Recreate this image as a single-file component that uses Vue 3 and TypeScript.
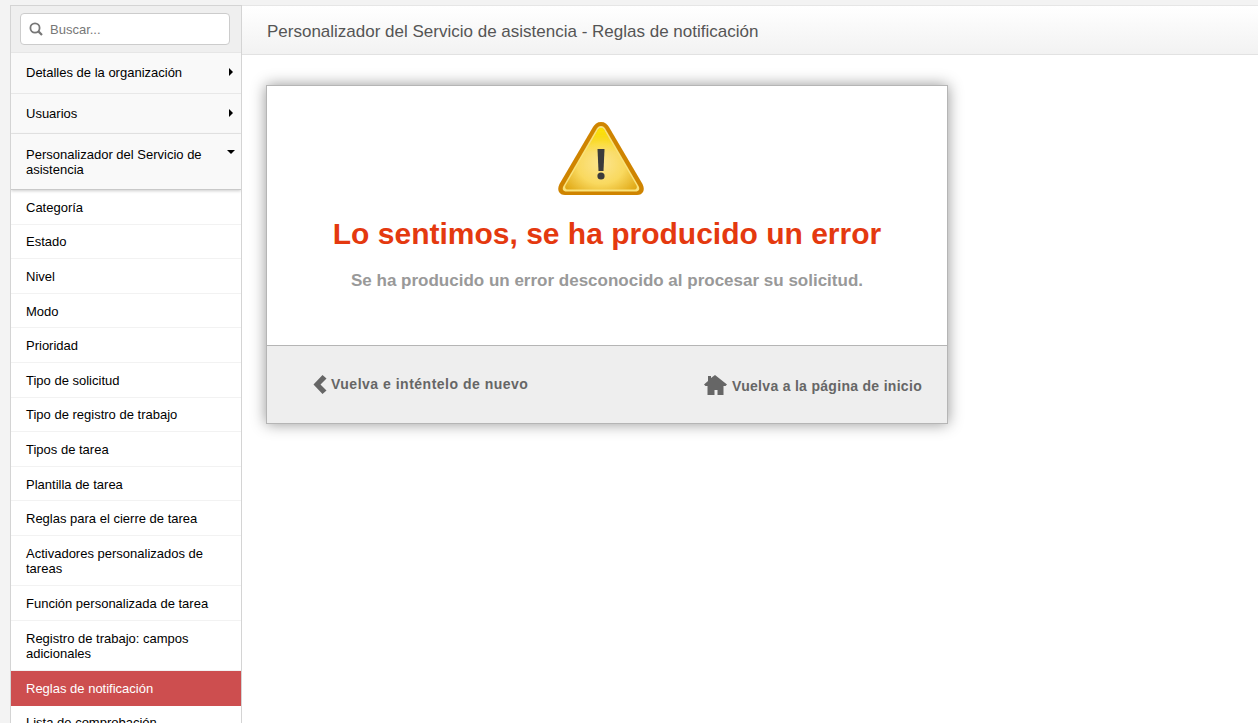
<script setup lang="ts">
interface Item { label: string; active?: boolean; tall?: boolean }
const top: { label: string; open?: boolean }[] = [
  { label: 'Detalles de la organización' },
  { label: 'Usuarios' },
  { label: 'Personalizador del Servicio de asistencia', open: true },
]
const items: Item[] = [
  { label: 'Categoría' }, { label: 'Estado' }, { label: 'Nivel' }, { label: 'Modo' },
  { label: 'Prioridad' }, { label: 'Tipo de solicitud' }, { label: 'Tipo de registro de trabajo' },
  { label: 'Tipos de tarea' }, { label: 'Plantilla de tarea' }, { label: 'Reglas para el cierre de tarea' },
  { label: 'Activadores personalizados de tareas', tall: true }, { label: 'Función personalizada de tarea' },
  { label: 'Registro de trabajo: campos adicionales', tall: true }, { label: 'Reglas de notificación', active: true },
  { label: 'Lista de comprobación' },
]
</script>

<template>
  <div class="page">
    <aside class="sidebar">
      <div class="search-wrap">
        <div class="search">
          <svg class="search-icon" width="14" height="14" viewBox="0 0 14 14">
            <circle cx="6" cy="6" r="4.6" fill="none" stroke="#777" stroke-width="1.8" />
            <path d="M9.4 9.4L13 13" stroke="#777" stroke-width="2.2" />
          </svg>
          <span class="placeholder">Buscar...</span>
        </div>
      </div>
      <div v-for="t in top" :key="t.label" class="top-item" :class="{ open: t.open }">
        <span class="top-label">{{ t.label }}</span>
        <span class="caret" :class="t.open ? 'down' : 'right'"></span>
      </div>
      <div v-for="i in items" :key="i.label" class="sub-item" :class="{ active: i.active, tall: i.tall }">{{ i.label }}</div>
    </aside>
    <main class="main">
      <header class="header">Personalizador del Servicio de asistencia - Reglas de notificación</header>
      <section class="content">
        <div class="card">
          <div class="card-body">
            <svg class="warn" width="88" height="76" viewBox="0 0 88 76">
              <defs>
                <radialGradient id="wg" cx="50%" cy="58%" r="66%">
                  <stop offset="0" stop-color="#fce58e" />
                  <stop offset="0.5" stop-color="#f9d95f" />
                  <stop offset="1" stop-color="#dda20c" />
                </radialGradient>
                <linearGradient id="wt" x1="0" y1="0" x2="0" y2="1">
                  <stop offset="0" stop-color="#ffe600" />
                  <stop offset="1" stop-color="#ffe600" stop-opacity="0" />
                </linearGradient>
                <filter id="soft"><feGaussianBlur stdDeviation="0.45" /></filter>
              </defs>
              <g filter="url(#soft)">
                <path d="M44 1C40 1 38 3 36 6L2.500 63C-0.500 69 2 74 8 74H80C86 74 88.500 69 85.500 63L52 6C50 3 48 1 44 1Z" fill="#cf8400" />
                <path d="M44 5C41.500 5 40.500 6.500 39 9L6.500 65C4.800 68 6 70.500 9.500 70.500H78.500C82 70.500 83.200 68 81.500 65L49 9C47.500 6.500 46.500 5 44 5Z" fill="#f9e27a" />
                <path d="M44 7C42 7 41 8.500 40 10.500L8.500 64.500C7.500 66.500 8.500 68.500 10.500 68.500H77.500C79.500 68.500 80.500 66.500 79.500 64.500L48 10.500C47 8.500 46 7 44 7Z" fill="url(#wg)" />
                <path d="M44 7C42 7 41 8.500 40 10.500L28 31H60L48 10.500C47 8.500 46 7 44 7Z" fill="url(#wt)" />
                <path d="M40.500 28H47.500L46.500 50H41.500Z" fill="#3a3a3a" />
                <circle cx="44" cy="55" r="3.600" fill="#3a3a3a" />
              </g>
            </svg>
            <h1 class="title">Lo sentimos, se ha producido un error</h1>
            <p class="message">Se ha producido un error desconocido al procesar su solicitud.</p>
          </div>
          <div class="card-footer">
            <a class="link back">
              <svg width="14" height="19" viewBox="0 0 14 19"><path d="M9.500 0L13.500 3.500L7.500 9.500L13.500 15.500L9.500 19L0.500 9.500Z" fill="#666" /></svg>
              Vuelva e inténtelo de nuevo
            </a>
            <a class="link home">
              <svg class="home-icon" width="23" height="20" viewBox="0 0 23 20"><path d="M4 1H7V3L11 0L23 9.500L21.500 11H19.500V20H13.500V15H10.500V20H3.500V11H1.500L0 9.500L4 6Z" fill="#666" /></svg>
              Vuelva a la página de inicio
            </a>
          </div>
        </div>
      </section>
    </main>
  </div>
</template>

<style>
html, body { margin: 0; overflow: hidden; background: #fff; }
</style>

<style scoped>
.page {
  display: flex;
  height: 723px;
  box-sizing: border-box;
  padding: 5px 0 0 10px;
  background: #f3f3f3;
  font-family: "Liberation Sans", Arial, sans-serif;
  overflow: hidden;
}
.sidebar {
  width: 232px;
  flex: none;
  box-sizing: border-box;
  background: #fff;
  border: 1px solid #d4d4d4;
  border-bottom: 0;
  overflow: hidden;
}
.search-wrap {
  background: #efefef;
  padding: 7px 11px 7px 9px;
  border-bottom: 1px solid #e6e6e6;
}
.search {
  height: 32px;
  box-sizing: border-box;
  background: #fff;
  border: 1px solid #ccc;
  border-radius: 4px;
  display: flex;
  align-items: center;
  padding-left: 8px;
  gap: 7px;
}
.placeholder { font-size: 13px; color: #777; }
.top-item {
  display: flex;
  justify-content: space-between;
  background: #f9f9f9;
  border-bottom: 1px solid #e8e8e8;
  padding: 12px 5px 12.5px 15px;
  font-size: 13px;
  line-height: 15px;
  color: #000;
}
.top-item.open {
  padding-top: 13px;
  padding-bottom: 12px;
  border-bottom: 1px solid #c9c9c9;
  box-shadow: 0 1px 3px rgba(0, 0, 0, 0.2);
  position: relative;
}
.top-label { width: 190px; }
.caret { width: 0; height: 0; margin-top: 3px; border-style: solid; border-color: transparent; }
.caret.right { border-width: 4px 0 4px 4px; border-left-color: #000; margin-right: 3px; }
.caret.down { border-width: 4px 4px 0 4px; border-top-color: #000; margin-top: 3px; margin-right: 1px; }
.sub-item {
  padding: 9.75px 15px 8.85px;
  font-size: 13px;
  line-height: 15px;
  color: #000;
  border-bottom: 1px solid #f2f2f2;
}
.sub-item.tall { padding-bottom: 9.5px; }
.sub-item.active { background: #cd4e4f; color: #fff; border-bottom-color: #cd4e4f; }
.main { flex: 1; min-width: 0; background: #fff; display: flex; flex-direction: column; border-top: 1px solid #e6e6e6; }
.header {
  height: 49px;
  box-sizing: border-box;
  padding-left: 25px;
  line-height: 52px;
  font-size: 17px;
  color: #555;
  background: linear-gradient(#fff, #f2f2f2);
  border-bottom: 1px solid #e2e2e2;
}
.content { padding: 30px 0 0 24px; }
.card {
  width: 682px;
  box-sizing: border-box;
  border: 1px solid #b5b5b5;
  background: #fff;
  box-shadow: 0 0 14px rgba(0, 0, 0, 0.42);
}
.card-body { height: 259px; box-sizing: border-box; padding-top: 35px; text-align: center; }
.warn { display: block; margin: 0 auto; position: relative; left: -6px; }
.title { margin: 19px 0 0; font-size: 30px; line-height: 36px; font-weight: 700; color: #e4390f; }
.message { margin: 19px 0 0; font-size: 17px; line-height: 20px; font-weight: 700; color: #999; }
.card-footer {
  height: 78px;
  box-sizing: border-box;
  background: #eee;
  border-top: 1px solid #b5b5b5;
  display: flex;
  justify-content: space-between;
  padding: 28px 25px 0 46px;
}
.link { display: flex; align-items: center; gap: 4px; height: 20px; font-size: 14px; font-weight: 700; color: #666; letter-spacing: 0.3px; }
.back { letter-spacing: 0.5px; }
.home { gap: 5px; margin-top: 2px; }
.home-icon { margin-top: -2px; }
</style>
